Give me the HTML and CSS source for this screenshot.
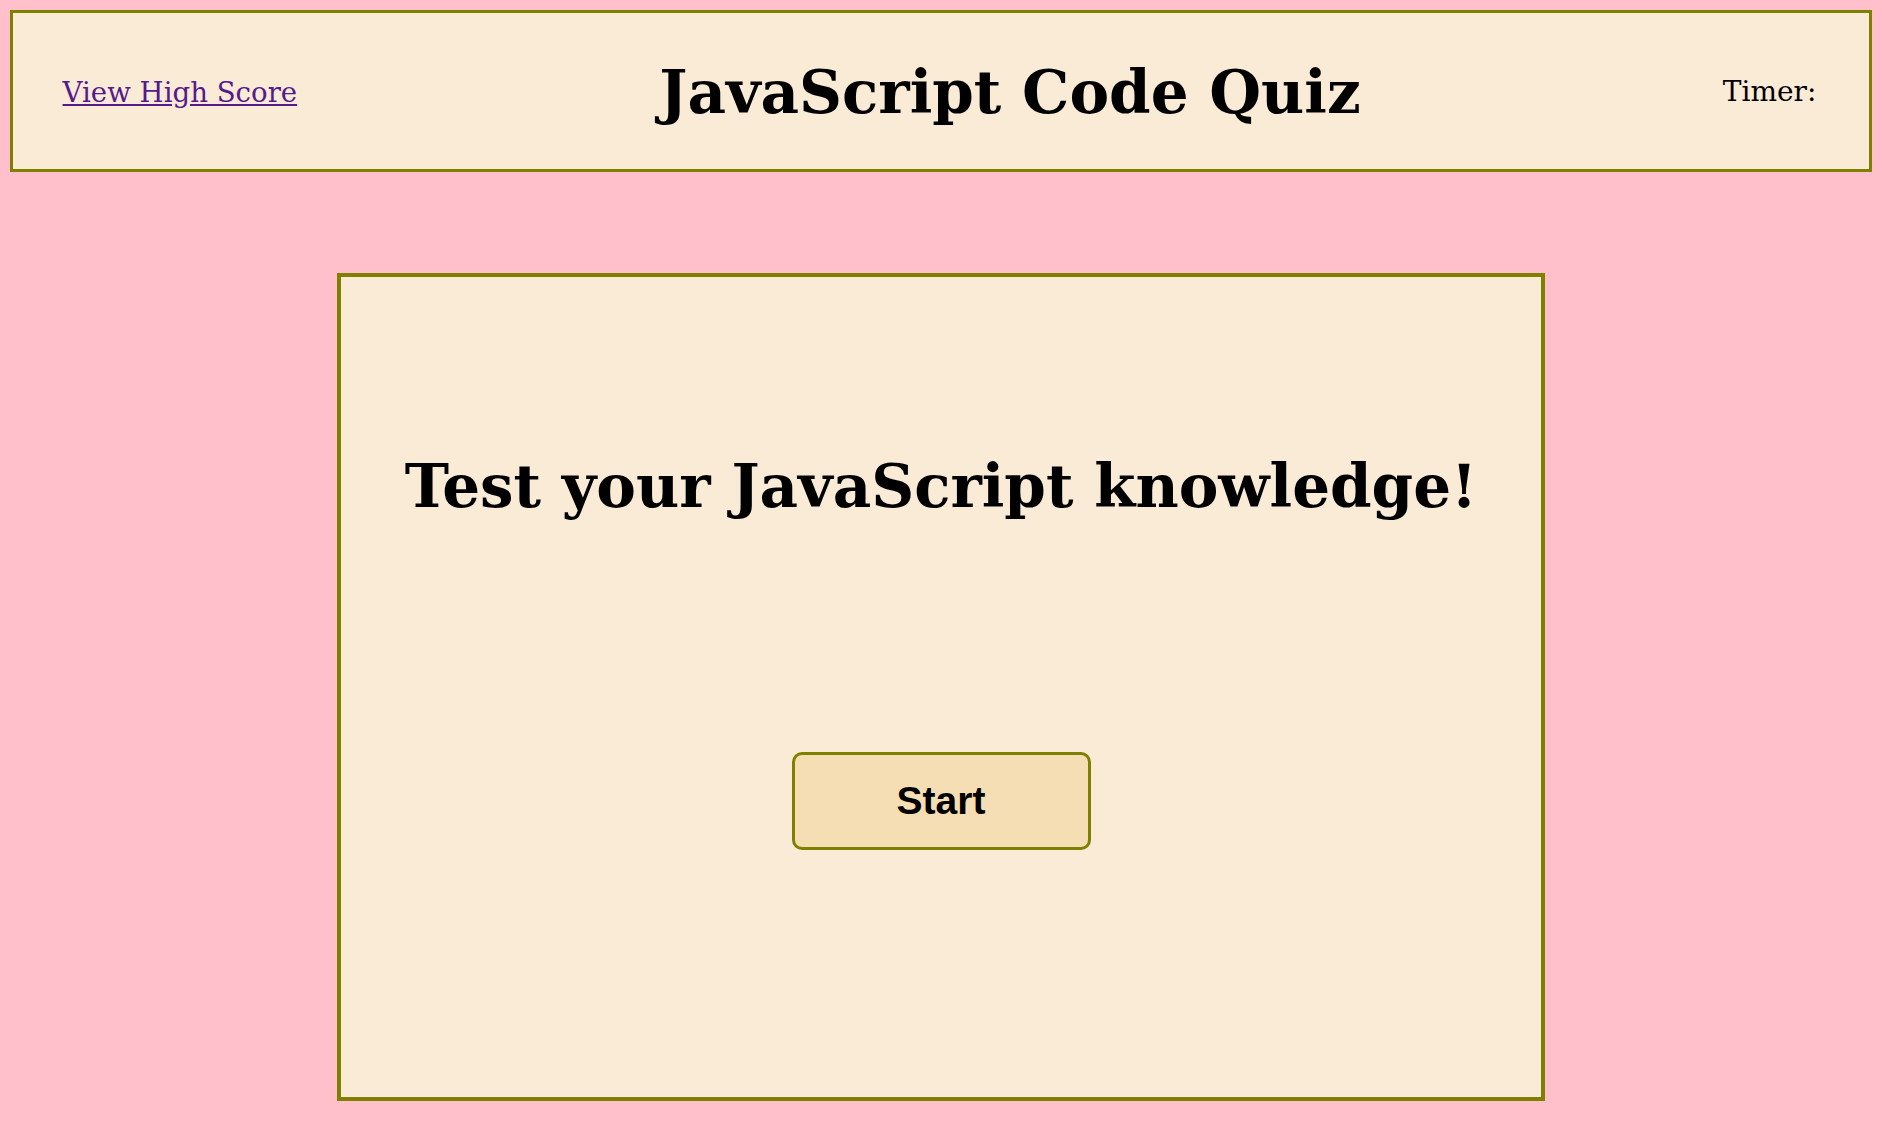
FILE: index.html
```html
<!DOCTYPE html>
<html lang="en">
<head>
<meta charset="utf-8">
<title>JavaScript Code Quiz</title>
<link rel="stylesheet" href="styles.css">
</head>
<body>
<header class="top-bar">
  <a class="high-score" href="#">View High Score</a>
  <h1 class="title">JavaScript Code Quiz</h1>
  <div class="timer">Timer:</div>
</header>
<main class="quiz-card">
  <h2 class="intro">Test your JavaScript knowledge!</h2>
  <button class="start-btn" type="button">Start</button>
</main>
</body>
</html>
```

FILE: styles.css
```css
html, body {
  background: #ffc0cb;
}
body {
  margin: 9.6px;
  font-family: Georgia, "DejaVu Serif", serif;
  color: #000;
}
.top-bar {
  box-sizing: border-box;
  height: 162px;
  background: #faebd7;
  border: 3px solid #808000;
  display: flex;
  align-items: center;
  justify-content: space-between;
  padding: 0 53px 0 50px;
}
.high-score {
  font-size: 27.6px;
  color: #551a8b;
  text-decoration: underline;
  padding-top: 4px;
}
.title {
  margin: 0;
  font-size: 59.5px;
  font-weight: bold;
  padding-top: 2px;
}
.timer {
  font-size: 28px;
  padding-top: 2px;
}
.quiz-card {
  box-sizing: border-box;
  width: 1208px;
  height: 828px;
  margin: 101.4px auto 0;
  background: #faebd7;
  border: 4px solid #808000;
  display: flex;
  flex-direction: column;
  align-items: center;
  padding-top: 174px;
}
.intro {
  margin: 0;
  font-size: 59.5px;
  line-height: 1.2;
  font-weight: bold;
}
.start-btn {
  box-sizing: border-box;
  margin-top: 230px;
  width: 299px;
  height: 98px;
  background: #f5deb3;
  border: 3px solid #808000;
  border-radius: 10px;
  font-family: "Liberation Sans", Arial, sans-serif;
  font-weight: bold;
  font-size: 39px;
  color: #000;
  padding: 0;
}
```
